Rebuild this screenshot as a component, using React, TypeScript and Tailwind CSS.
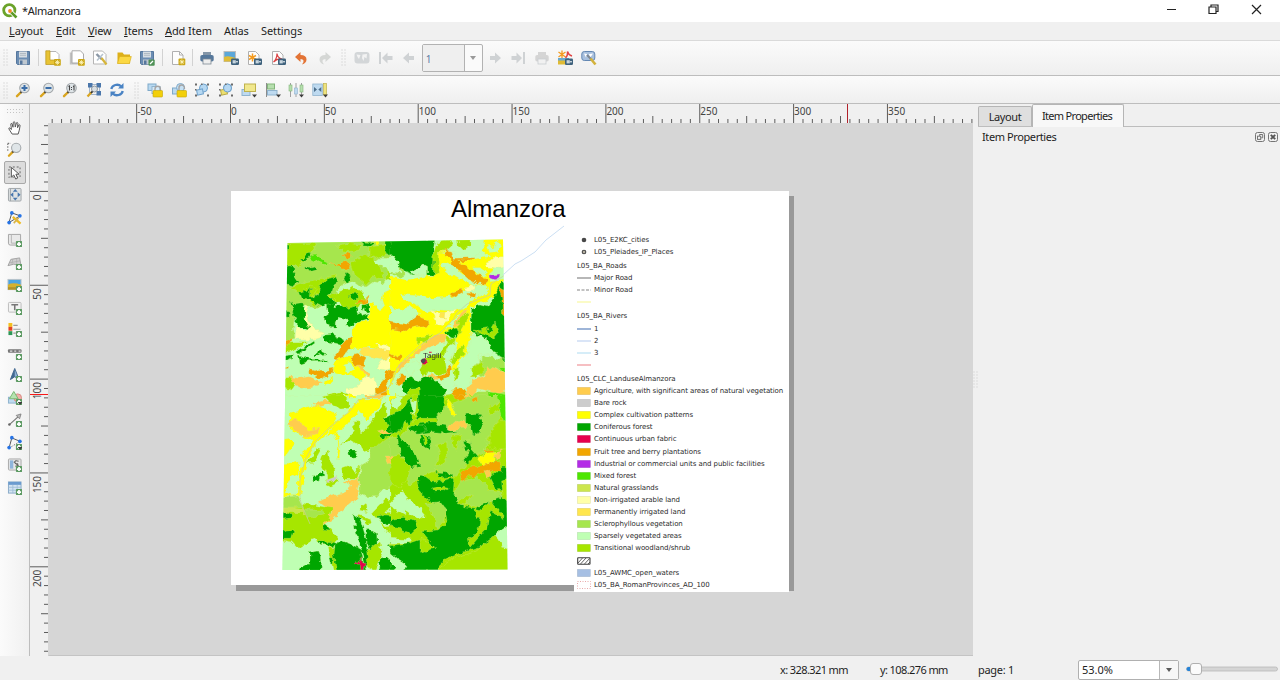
import React from "react";

const UI = "font-['Noto_Sans','Open_Sans',sans-serif]";

/* ---------- map data ---------- */

const P = "#bfffb3";
const T = "#a6e600";
const S = "#a6e64d";
const F = "#00a600";
const Y = "#ffff00";
const O = "#f2a600";
const A = "#ffcc4d";
const N = "#ffffa8";
const E = "#ffe64d";
const M = "#4de600";
const G = "#cce64d";
const U = "#e6004d";
const V = "#b32be6";
const R = "#cccccc";

type Shape = [string, string];

const northWest: Shape[] = [
  [P, "0,0 390,0 390,540 0,540"],
  [S, "40,40 350,40 345,75 372,95 350,100 325,100 305,115 315,130 335,120 355,135 375,150 370,165 350,160 340,175 310,170 290,185 270,185 250,170 230,175 210,185 205,200 150,250 130,250 105,240 75,250 70,310 75,340 40,350"],
  [T, "40,55 140,55 130,75 110,90 90,120 60,125 40,120"],
  [T, "200,65 240,55 270,60 265,75 235,80 210,75"],
  [T, "240,110 270,100 290,85 310,105 330,125 340,160 320,165 310,150 290,180 270,165 250,150"],
  [T, "300,65 345,60 350,85 320,100 300,95"],
  [T, "60,190 110,170 160,160 200,150 195,165 170,175 140,210 100,225 85,200"],
  [T, "170,215 210,200 250,185 280,205 290,230 260,250 230,255 210,235 190,225"],
  [T, "110,190 120,180 140,190 128,215 145,235 130,245 118,230"],
  [T, "350,140 368,130 390,150 390,165 365,168 350,160"],
  [F, "272,48 318,50 305,62 280,60"],
  [Y, "310,48 328,46 326,60 318,62"],
  [F, "345,44 395,40 395,118 378,115 365,98 350,85 345,70"],
  [F, "40,55 58,58 57,72 40,74"],
  [F, "40,125 65,122 76,140 75,155 88,175 70,182 40,175"],
  [F, "92,102 105,95 118,82 125,85 118,100 100,108"],
  [F, "107,125 118,130 135,125 138,135 120,140 108,135"],
  [F, "232,142 242,150 235,175 225,172 222,160"],
  [F, "85,200 100,195 115,200 122,188 122,210 130,215 145,208 150,182 175,160 198,156 204,172 192,180 185,205 170,215 200,230 200,240 172,238 155,246 132,235 118,222 92,218"],
  [F, "60,225 70,240 95,236 105,255 105,280 120,305 110,315 85,303 75,290 68,260"],
  [F, "40,255 58,262 58,275 40,280"],
  [F, "172,238 192,232 195,245 225,240 235,250 258,243 262,262 280,272 297,268 295,280 262,290 245,305 232,300 228,283 212,278 196,290 195,310 172,300 160,278 175,268"],
  [F, "237,205 262,205 262,220 245,223 235,215"],
  [F, "275,240 297,235 297,262 290,265 285,248 276,260"],
  [F, "165,330 190,328 225,347 215,357 170,350 160,340"],
  [F, "80,380 130,348 135,352 85,387"],
  [F, "130,388 150,378 165,385 158,395 148,388 135,393"],
  [F, "85,390 100,393 115,403 175,404 175,409 110,410 90,417"],
  [F, "40,390 70,386 68,400 40,407"],
  [M, "118,98 135,90 150,95 160,105 175,112 160,118 145,113 125,105"],
  [O, "180,115 215,120 210,110 225,107 240,120 232,135 215,135 205,127"],
  [O, "218,84 235,84 245,95 240,105 225,100"],
  [O, "258,232 280,228 298,212 292,235 275,240"],
  [N, "105,240 118,245 110,260 120,290 135,312 160,322 155,340 135,345 75,345 80,302 105,320 118,305 107,280"],
  [T, "60,350 110,350 85,370 40,385 40,365"],
  [Y, "395,185 365,178 362,195 340,205 335,225 342,245 330,255 310,235 298,235 300,270 290,285 262,290 250,310 242,350 235,372 270,375 300,365 395,385 395,310 370,300 358,280 365,255 385,240 395,235"],
  [E, "275,370 320,368 395,375 395,395 340,402 300,395 270,385"],
  [N, "315,356 345,360 375,370 385,380 340,377"],
  [Y, "190,415 210,397 240,390 250,415 280,430 285,455 270,465 245,450 210,445 190,440"],
  [P, "218,420 240,415 255,430 240,442 222,435"],
  [A, "250,415 275,420 300,450 295,460 272,438"],
  [O, "242,335 248,335 240,365 220,395 200,405 190,402 215,360 228,345"],
  [O, "40,350 68,340 60,360 40,365"],
  [O, "118,430 150,440 190,432 188,445 150,460 120,445"],
  [O, "245,390 262,385 288,395 280,425 250,415 243,400"],
  [O, "40,425 55,424 55,430 40,432"],
  [A, "58,455 85,460 120,455 155,472 125,488 95,490 65,475"],
  [T, "40,458 60,458 75,480 65,495 40,490"],
  [N, "320,430 335,405 375,395 365,430 345,435"],
  [T, "165,510 210,500 245,510 230,540 185,540"],
  [A, "130,535 155,525 185,530 180,540 130,540"],
  [Y, "160,475 185,457 185,475 165,485"],
  [Y, "235,545 262,520 330,520 390,440 390,545"],
  [N, "225,490 260,490 280,460 315,460 320,500 290,515 265,520 230,505"],
  [A, "295,515 330,500 340,515 320,525"],
  [O, "345,440 372,430 370,445 350,475 350,515 320,512 318,490 340,465"],
  [O, "360,290 395,300 395,318 365,305"],
  [O, "378,480 395,455 395,490"],
];

const northEast: Shape[] = [
  [P, "0,0 390,0 390,540 0,540"],
  [Y, "0,155 50,165 135,150 145,80 175,85 190,110 270,100 300,95 275,70 285,30 360,30 360,90 315,120 300,150 300,170 345,165 315,215 270,235 240,245 242,340 230,380 200,430 180,440 200,390 200,330 150,330 90,380 30,430 0,480"],
  [P, "155,110 180,115 215,145 250,160 290,175 245,180 220,165 190,155 155,125"],
  [P, "245,125 275,125 292,150 275,155 250,140"],
  [P, "30,208 90,212 120,220 190,215 250,180 290,178 295,205 260,215 225,250 190,258 150,255 110,262 80,240 40,225"],
  [P, "0,245 40,250 65,245 90,265 80,285 50,300 0,295"],
  [P, "290,60 310,70 318,48 335,60 325,80 300,82"],
  [P, "180,75 185,40 280,42 280,75 250,100 210,95"],
  [S, "0,118 20,115 45,125 45,150 30,158 0,145"],
  [P, "0,90 12,95 30,120 30,145 0,140"],
  [F, "0,40 135,40 130,75 135,120 130,150 112,150 112,120 100,118 85,130 70,150 45,140 28,120 10,92 0,92"],
  [P, "62,140 85,130 102,118 112,125 112,150 75,152"],
  [T, "140,55 180,40 188,60 165,80 145,82 145,145 130,152 132,80"],
  [T, "200,40 240,40 240,65 225,75 205,65"],
  [O, "160,75 185,78 190,100 255,98 240,108 200,108 230,125 260,150 290,160 290,172 265,175 235,160 215,140 180,120 180,100"],
  [O, "178,212 190,200 215,192 215,202 195,212"],
  [O, "233,205 258,205 255,217 238,215"],
  [O, "0,290 45,300 80,272 115,285 118,300 75,305 45,318 0,312"],
  [N, "285,115 300,110 315,95 350,95 350,125 325,130 290,125"],
  [N, "225,185 255,180 255,195 235,200"],
  [N, "120,255 150,265 200,255 170,285 155,305 140,300 135,275"],
  [E, "150,262 165,262 163,280 148,278"],
  [P, "165,310 205,270 222,262 212,292 190,308"],
  [A, "195,290 215,262 233,250 222,275 212,300 190,306"],
  [F, "245,250 270,240 290,245 310,220 330,175 360,170 360,410 340,408 330,390 300,375 295,345 270,332 243,328 243,290"],
  [O, "325,183 360,205 360,275 338,270 335,215"],
  [F, "165,320 200,306 206,320 200,338 180,335"],
  [P, "240,335 275,333 312,375 305,385 270,390 250,450 230,490 190,485 195,440 215,400 238,380"],
  [T, "250,315 275,320 275,308 290,305 300,330 315,290 325,320 310,338 280,325 255,325"],
  [A, "80,378 105,350 150,325 172,330 165,350 110,370 70,395 50,412 20,450 25,420"],
  [T, "80,340 130,328 105,352 78,357"],
  [T, "110,395 150,385 170,350 165,335 200,340 195,365 165,400 170,440 145,450 120,440 95,455 88,430"],
  [P, "45,430 65,412 85,408 90,430 60,450"],
  [P, "175,365 205,350 195,370 180,410 160,400"],
  [T, "205,285 232,262 230,290 210,325 200,335 205,310"],
  [T, "225,355 222,385 190,420 183,412 195,380"],
  [O, "130,455 160,450 183,420 185,440 175,458 155,467"],
  [A, "95,455 130,448 150,465 120,460"],
  [F, "35,470 60,455 85,470 110,452 135,465 165,490 160,540 70,540 45,500"],
  [T, "62,490 90,488 92,520 100,540 78,540 72,515 50,510"],
  [T, "190,430 205,425 205,460 195,465"],
  [S, "245,455 255,420 285,392 345,405 360,445 310,430 275,455"],
  [T, "245,430 275,410 285,435 262,455 245,455"],
  [S, "160,510 230,500 345,500 360,540 160,540"],
  [O, "185,495 215,488 232,510 210,525 185,515"],
  [A, "250,465 285,452 292,425 315,430 360,450 350,495 320,508 295,498 262,490 245,522 225,495"],
  [O, "250,520 262,515 258,530 248,528"],
  [M, "290,500 325,505 360,510 360,540 335,535"],
  [M, "330,425 360,425 360,455 338,440"],
  [Y, "170,515 180,525 182,540 172,540"],
  [O, "0,435 15,440 5,460 0,460"],
  [O, "15,480 30,452 50,452 40,475 25,482"],
  [O, "0,385 35,398 30,405 0,395"],
  [V, "300,150 330,147 326,161 315,164 301,159"],
  [U, "95,405 108,402 107,418 97,418"],
  [U, "117,380 122,380 122,384 117,384"],
];

const southWest: Shape[] = [
  [P, "0,0 390,0 390,560 0,560"],
  [Y, "60,55 100,40 140,28 160,42 190,50 202,70 190,90 165,118 140,140 118,180 102,240 95,295 80,302 88,230 105,192 92,180 110,165 130,135 100,125 60,105"],
  [Y, "30,135 60,130 72,145 50,178 30,195"],
  [Y, "30,208 88,200 85,235 60,245 45,290 70,300 90,290 90,300 30,303"],
  [Y, "265,12 335,12 325,35 290,75 265,45 230,90 200,115 165,125 190,90 240,45"],
  [Y, "192,118 202,115 210,165 208,190 202,190 205,150"],
  [Y, "215,0 260,0 260,8 240,10"],
  [A, "280,0 350,0 340,10 285,9"],
  [A, "52,90 75,72 95,85 115,105 150,100 145,115 100,125 75,105"],
  [A, "130,25 160,15 185,15 185,25 150,35"],
  [T, "160,5 180,0 215,0 240,22 240,40 215,42 190,32"],
  [T, "250,80 270,80 272,115 300,90 315,60 345,20 350,65 395,60 395,130 330,150 300,165 285,170 275,155 240,135 212,152 250,110"],
  [F, "395,35 370,55 345,70 355,95 335,110 325,125 340,132 370,118 378,145 380,185 395,180"],
  [S, "300,160 340,140 365,122 378,150 382,190 395,190 395,240 370,280 340,285 320,305 290,305 268,295 265,250 275,210 300,195"],
  [T, "160,175 175,165 180,200 195,225 190,240 200,265 180,275 170,270 170,240 150,205"],
  [T, "110,208 140,160 152,165 130,205"],
  [T, "215,222 235,215 260,230 272,210 262,250 220,250"],
  [F, "235,165 255,165 262,185 245,187 238,180"],
  [F, "127,242 145,240 155,228 160,245 145,255 130,258"],
  [R, "170,255 203,243 203,255 175,263"],
  [A, "147,320 175,305 215,295 235,285 240,268 220,258 265,250 265,270 262,285 268,310 240,325 215,345 190,370 155,392 185,350 165,335"],
  [A, "345,183 368,183 365,200 352,207"],
  [A, "325,108 345,103 360,115 345,118"],
  [T, "30,340 100,325 160,335 185,340 178,370 155,390 170,390 185,405 200,430 190,455 160,450 130,430 110,445 85,462 65,440 30,435"],
  [S, "30,305 85,303 100,335 30,338"],
  [S, "100,345 155,345 165,355 115,370"],
  [G, "30,335 100,340 100,353 30,352"],
  [F, "30,350 65,360 60,370 30,373"],
  [F, "30,412 72,405 65,430 30,430"],
  [F, "155,392 165,387 182,405 160,403"],
  [F, "145,437 185,440 215,450 180,452 150,447"],
  [F, "75,530 120,505 120,470 145,465 152,490 150,530"],
  [T, "175,455 195,455 202,530 190,530 180,480"],
  [F, "195,450 215,437 250,450 270,460 275,490 290,530 200,530 192,480"],
  [F, "177,485 190,485 190,510 180,505"],
  [F, "250,355 270,370 285,420 295,470 300,510 285,520 270,450 255,400"],
  [F, "290,400 320,415 322,455 300,465 290,440"],
  [F, "315,362 350,355 395,370 395,390 350,390 330,375"],
  [F, "330,490 350,485 378,510 375,530 325,530"],
  [F, "350,445 395,450 395,495 375,485"],
  [T, "265,360 300,370 305,385 285,390 288,378 268,370"],
  [T, "300,358 345,312 380,310 350,350 385,362 350,360 318,368"],
  [T, "325,378 350,395 395,390 395,435 350,410"],
  [T, "290,470 330,440 335,475 315,530 295,520"],
  [T, "270,325 290,330 292,350 270,345"],
  [U, "253,500 262,505 272,488 276,500 290,510 280,516 280,530 270,530 268,508 254,507"],
];

const southEast: Shape[] = [
  [T, "0,0 390,0 390,560 0,560"],
  [S, "0,125 30,130 60,90 150,40 260,0 360,0 335,60 300,110 285,170 240,190 210,230 190,250 140,225 90,245 60,270 40,230 0,180"],
  [F, "80,0 165,0 158,50 140,60 142,88 172,92 172,105 205,110 170,115 130,110 80,118 75,90 85,50"],
  [F, "0,60 40,42 62,5 68,45 65,80 100,90 110,110 85,115 60,105 45,75 38,100 0,118"],
  [T, "55,100 60,75 75,80 95,70 140,70 140,80 95,82 75,92"],
  [F, "20,110 40,140 78,180 88,212 60,217 30,175"],
  [F, "88,120 110,120 130,145 115,165 95,150"],
  [T, "98,122 108,122 115,148 105,150"],
  [F, "230,58 270,55 280,85 265,120 245,115 240,90 230,80"],
  [F, "215,140 240,138 245,165 260,182 235,207 220,195 238,175"],
  [T, "295,40 335,20 330,45 300,60"],
  [T, "300,120 325,80 360,80 360,165 325,165 295,150"],
  [T, "140,150 170,140 172,180 155,210 135,215 150,175"],
  [T, "185,120 210,120 200,165 190,160"],
  [T, "0,185 30,180 60,215 50,255 30,280 0,265"],
  [F, "80,255 100,240 130,262 185,250 195,262 192,300 220,310 222,335 260,340 300,305 345,300 360,320 360,385 320,435 270,455 200,478 160,495 140,530 0,530 0,455 50,448 88,435 135,460 95,410 140,405 172,380 165,345 120,318 90,290"],
  [F, "132,232 155,232 185,235 190,245 150,248 140,225"],
  [T, "90,430 115,440 138,460 120,463 105,475 90,465"],
  [S, "105,325 150,320 168,345 165,375 140,400 128,350"],
  [T, "125,280 150,275 175,280 160,290 130,290"],
  [S, "190,300 215,255 260,245 300,285 350,292 330,310 260,335 210,328"],
  [T, "245,300 225,330 200,325 232,300"],
  [T, "255,340 275,345 300,318 345,372 300,348 290,400 240,457 235,430 262,410 272,370 258,370"],
  [F, "300,245 345,215 360,225 360,280 320,285"],
  [T, "335,255 360,250 360,320 340,310"],
  [T, "138,530 190,488 250,472 330,410 360,430 360,530"],
  [P, "318,415 360,385 360,465 335,455"],
  [P, "0,325 35,290 48,310 70,320 108,365 85,372 45,345 45,362 0,335"],
  [P, "0,430 65,435 55,447 0,448"],
  [P, "0,470 22,490 45,505 40,530 20,530 0,500"],
  [P, "60,12 80,18 75,65 68,50"],
  [P, "0,35 15,0 38,2 28,40 10,38"],
  [F, "0,378 40,370 75,378 80,395 60,415 40,408 30,395 0,390"],
  [O, "210,240 240,215 270,215 290,200 330,200 337,232 290,228 260,240 235,243 215,263"],
  [O, "285,165 312,162 310,178 285,178"],
  [O, "190,0 225,0 228,12 200,14"],
  [O, "248,12 262,5 262,15 252,22"],
  [A, "225,0 240,0 243,10 228,10"],
  [A, "172,102 195,80 225,72 230,98 205,102 185,108"],
  [A, "318,172 334,168 328,195 312,192"],
  [A, "283,228 302,222 302,245 292,252"],
  [A, "0,182 8,185 0,200"],
  [Y, "262,188 285,175 318,172 312,198 280,212"],
  [Y, "170,8 185,30 200,60 195,65 178,48"],
  [Y, "0,0 15,0 0,28"],
  [M, "322,0 360,0 360,85 340,80"],
];

const quadrants: { x: number; y: number; shapes: Shape[] }[] = [
  { x: 270, y: 225, shapes: northWest },
  { x: 390, y: 225, shapes: northEast },
  { x: 270, y: 395, shapes: southWest },
  { x: 390, y: 395, shapes: southEast },
];

function LandUseMap() {
  return (
    <svg className="absolute left-[221px] top-[102px]" width="300" height="350" viewBox="270 225 300 350">
      <defs>
        <clipPath id="mapFrame">
          <polygon points="287.5,243 503,239.5 507.5,569.5 282.5,570" />
        </clipPath>
        <filter id="ragged" x="0" y="0" width="100%" height="100%" colorInterpolationFilters="sRGB">
          <feTurbulence type="fractalNoise" baseFrequency="0.17" numOctaves="2" seed="7" result="n" />
          <feDisplacementMap in="SourceGraphic" in2="n" scale="6.5" xChannelSelector="R" yChannelSelector="G" />
        </filter>
      </defs>
      <g clipPath="url(#mapFrame)">
        <rect x="270" y="225" width="250" height="350" fill={P} />
        <g filter="url(#ragged)">
          {quadrants.map((q) => (
            <svg key={`${q.x}-${q.y}`} x={q.x} y={q.y} width="130" height="185" viewBox="0 0 390 555">
              {q.shapes.map(([fill, points], i) => (
                <polygon key={i} points={points} fill={fill} stroke="#d8e88a" strokeWidth="1.200" strokeOpacity="0.7" />
              ))}
            </svg>
          ))}
        </g>
        <path
          d="M505 275L491 284L490 295L467 304L457 313L453 320L440 333L423 343L407 357L397 368L392 382L386 391L372 397L358 400L350 411L330 427L315 442L305 460L300 480L300 500L306 515L310 524"
          fill="none"
          stroke="#c3d0a0"
          strokeWidth="0.800"
          strokeOpacity="0.9"
        />
      </g>
      <path d="M503 275L515 264L521 261L535 252L546 240L564 226" fill="none" stroke="#cbdff3" strokeWidth="1" />
      <circle cx="423.500" cy="361" r="2.400" fill="#4c4a50" />
      <path d="M424.500 362L427 359.500L426.500 363L423.500 365Z" fill={U} fillOpacity="0.800" />
    </svg>
  );
}

/* ---------- legend ---------- */

type Entry = { kind: string; label: string; color?: string };

const legendEntries: Entry[] = [
  { kind: "dot", label: "L05_E2KC_cities" },
  { kind: "ring", label: "L05_Pleiades_IP_Places" },
  { kind: "head", label: "L05_BA_Roads" },
  { kind: "line", label: "Major Road", color: "#7c7c7c" },
  { kind: "dash", label: "Minor Road", color: "#858585" },
  { kind: "line", label: "", color: "#f7f79a" },
  { kind: "head", label: "L05_BA_Rivers" },
  { kind: "line", label: "1", color: "#4f78b8" },
  { kind: "line", label: "2", color: "#bccff0" },
  { kind: "line", label: "3", color: "#b5def2" },
  { kind: "line", label: "", color: "#ee8a90" },
  { kind: "head", label: "L05_CLC_LanduseAlmanzora" },
  { kind: "fill", label: "Agriculture, with significant areas of natural vegetation", color: A },
  { kind: "fill", label: "Bare rock", color: R },
  { kind: "fill", label: "Complex cultivation patterns", color: Y },
  { kind: "fill", label: "Coniferous forest", color: F },
  { kind: "fill", label: "Continuous urban fabric", color: U },
  { kind: "fill", label: "Fruit tree and berry plantations", color: O },
  { kind: "fill", label: "Industrial or commercial units and public facilities", color: V },
  { kind: "fill", label: "Mixed forest", color: M },
  { kind: "fill", label: "Natural grasslands", color: G },
  { kind: "fill", label: "Non-irrigated arable land", color: N },
  { kind: "fill", label: "Permanently irrigated land", color: E },
  { kind: "fill", label: "Sclerophyllous vegetation", color: S },
  { kind: "fill", label: "Sparsely vegetated areas", color: P },
  { kind: "fill", label: "Transitional woodland/shrub", color: T },
  { kind: "hatch", label: "" },
  { kind: "fill", label: "L05_AWMC_open_waters", color: "#a6bfe3" },
  { kind: "dotted", label: "L05_BA_RomanProvinces_AD_100" },
];

function Symbol({ kind, color }: { kind: string; color?: string }) {
  return (
    <svg width="14" height="8" viewBox="0 0 14 8" className="shrink-0">
      {kind === "dot" && <circle cx="7" cy="4" r="2.300" fill="#484848" />}
      {kind === "ring" && <circle cx="7" cy="4" r="1.800" fill="#b5b0a0" stroke="#484848" strokeWidth="1.100" />}
      {kind === "line" && <path d="M0 4H14" stroke={color} strokeWidth="1.100" />}
      {kind === "dash" && <path d="M0 4H14" stroke={color} strokeWidth="1.100" strokeDasharray="3 1.500" />}
      {kind === "fill" && <rect x="0.300" y="0.300" width="13.200" height="7.400" fill={color} stroke="#00000022" strokeWidth="0.500" />}
      {kind === "hatch" && (
        <g stroke="#3c3c3c" strokeWidth="0.800" fill="none">
          <rect x="0.700" y="0.700" width="12.300" height="6.600" rx="0.500" strokeWidth="1.100" />
          <path d="M1 6L5.500 1M3.500 7L9 1M7.500 7L12.500 1.500M11 7L13 5" />
        </g>
      )}
      {kind === "dotted" && (
        <rect x="0.500" y="0.500" width="13" height="7" fill="#fff" stroke="#e8a9a9" strokeDasharray="1 1.500" />
      )}
    </svg>
  );
}

function Legend() {
  return (
    <div className="absolute left-[525px] top-[111px] flex h-[358px] w-[214.5px] flex-col overflow-hidden bg-white pl-[3px] font-['DejaVu_Sans',sans-serif] text-[7px] leading-[12.17px] text-[#2b2b2b]">
      {legendEntries.map((e, i) =>
        e.kind === "head" ? (
          <div key={i} className="mt-[1.900px] h-[12.120px] shrink-0 whitespace-nowrap tracking-[-0.080px]">
            {e.label}
          </div>
        ) : (
          <div key={i} className="flex h-[12.120px] shrink-0 items-center gap-[3px] whitespace-nowrap tracking-[-0.080px]">
            <Symbol kind={e.kind} color={e.color} />
            <span>{e.label}</span>
          </div>
        )
      )}
    </div>
  );
}

/* ---------- icons ---------- */

function Lens({ children }: { children?: React.ReactNode }) {
  return (
    <g>
      <path d="M2 14.200L6.200 10" stroke="#d9a520" strokeWidth="2.400" strokeLinecap="round" />
      <path d="M5.500 10.700L7 9.200" stroke="#333" strokeWidth="2" />
      <circle cx="9.500" cy="6" r="4.800" fill="#dfe5e8" stroke="#a3a8ab" strokeWidth="1.100" />
      {children}
    </g>
  );
}

function Star({ x, y }: { x: number; y: number }) {
  return (
    <g transform={`translate(${x} ${y})`}>
      <rect width="6.800" height="6.800" rx="1" fill="#cba716" />
      <path d="M3.400 1V5.800M1 3.400H5.800M1.700 1.700L5.100 5.100M5.100 1.700L1.700 5.100" stroke="#fff7c4" strokeWidth="0.800" />
    </g>
  );
}

function Plus() {
  return (
    <g>
      <rect x="9.200" y="9.200" width="6.400" height="6.400" rx="0.800" fill="#5d9a63" />
      <path d="M12.400 10.300V14.500M10.300 12.400H14.500" stroke="#fff" strokeWidth="1.800" />
    </g>
  );
}

function Disk() {
  return (
    <g>
      <path d="M1.500 1.500H14.500V14.500H2.500L1.500 13.500Z" fill="#6b8db3" stroke="#56779d" />
      <rect x="4" y="1.500" width="8" height="6" fill="#d7dde3" />
      <path d="M5 3.500H11M5 5.300H11" stroke="#a1acb6" strokeWidth="0.700" />
      <rect x="4" y="9.500" width="8" height="5" fill="#bfc8d0" />
      <rect x="5" y="10.500" width="2.500" height="4" fill="#56779d" />
    </g>
  );
}

function Export() {
  return (
    <g>
      <rect x="8" y="8.500" width="8" height="6.500" rx="1.200" fill="#3f627d" />
      <rect x="9.600" y="10.200" width="3.200" height="3.200" fill="#c9d6df" />
      <path d="M13 11.800H15" stroke="#fff" />
    </g>
  );
}

function Paper() {
  return <path d="M2.500 1.500H9.500L13 5V14.500H2.500Z" fill="#fdfdfd" stroke="#b0b0b0" />;
}

function Lock({ open }: { open?: boolean }) {
  return (
    <g>
      <path d={open ? "M8 9V6a2.700 2.700 0 0 1 5.400-0.500V7" : "M8 9V7a2.700 2.700 0 0 1 5.400 0V9"} fill="none" stroke="#a5a5a5" strokeWidth="1.400" />
      <rect x="6" y="8.500" width="9.500" height="6.500" rx="0.800" fill="#f2cf0a" stroke="#c5a505" strokeWidth="0.600" />
    </g>
  );
}

function Vertices() {
  return (
    <g fill="#6b6b6b">
      <rect x="1" y="1.500" width="2" height="2" />
      <rect x="7" y="1.500" width="1.500" height="1.500" />
      <rect x="13" y="1.500" width="2" height="2" />
      <rect x="1" y="7" width="1.500" height="1.500" />
      <rect x="1" y="12.500" width="2" height="2" />
      <rect x="13" y="12.500" width="2" height="2" />
    </g>
  );
}

const Drop = () => <path d="M11 12.500H16L13.500 15.500Z" fill="#3c3c3c" />;

function Glyph({ name }: { name: string }) {
  switch (name) {
    case "save":
      return <Disk />;
    case "newLayout":
      return (
        <g>
          <path d="M2 5V1.500H11L14 4.500V14H5" fill="#fff" stroke="#b5b5b5" />
          <path d="M0.800 0.800H5V10H10V14.500H0.800Z" fill="#e8c334" stroke="#b9961a" strokeWidth="0.700" />
          <Star x={9} y={9} />
        </g>
      );
    case "duplicate":
      return (
        <g>
          <rect x="0.800" y="2.500" width="11" height="12" fill="#c2c2c2" />
          <path d="M3 0.800H11.500L14.500 4V13H3Z" fill="#fff" stroke="#aaa" />
          <Star x={9} y={9} />
        </g>
      );
    case "manager":
      return (
        <g>
          <path d="M1.500 1H10.500L14 4.500V14H1.500Z" fill="#fff" stroke="#b5b5b5" />
          <path d="M4.500 4L10 9.500" stroke="#8a97a5" strokeWidth="2.400" />
          <path d="M9.500 8L14.500 14.500" stroke="#d6b53a" strokeWidth="2.200" />
          <path d="M11 4L5 10.500" stroke="#b3c1cd" strokeWidth="1.500" />
        </g>
      );
    case "open":
      return (
        <g>
          <path d="M1.500 13.500V2.500H6.500L8 4.500H14V13.500Z" fill="#ddb01a" />
          <path d="M1.500 13.500L3.500 6.500H15.300L13.500 13.500Z" fill="#fbd843" stroke="#d8ac18" strokeWidth="0.600" />
        </g>
      );
    case "saveAs":
      return (
        <g>
          <Disk />
          <rect x="9.500" y="9.500" width="6.200" height="6.200" rx="1" fill="#4f9157" />
          <path d="M11 14L14 11" stroke="#fff" strokeWidth="1.200" />
        </g>
      );
    case "addPages":
      return (
        <g>
          <Paper />
          <path d="M9.500 1.500V5H13" fill="none" stroke="#b0b0b0" />
          <Star x={8.500} y={8.500} />
        </g>
      );
    case "print":
    case "printOff":
      return (
        <g opacity={name === "print" ? 1 : 0.35}>
          <rect x="4" y="2" width="8" height="4" fill={name === "print" ? "#8496a8" : "#999"} />
          <rect x="1.300" y="5" width="13.400" height="6.500" rx="1.800" fill={name === "print" ? "#56789b" : "#999"} />
          <rect x="4" y="9" width="8" height="5" fill="#eee" stroke="#7d8994" strokeWidth="0.800" />
        </g>
      );
    case "image":
      return (
        <g>
          <rect x="1" y="1.500" width="11.500" height="10" fill="#5ba7d9" stroke="#bdbdbd" />
          <path d="M1 7Q5 5 12.500 8V11.500H1Z" fill="#dfbc38" />
          <Export />
        </g>
      );
    case "svg":
      return (
        <g>
          <Paper />
          <path d="M6.500 3.500V11.500M3 5.500L10 9.500M10 5.500L3 9.500" stroke="#f39a1e" strokeWidth="1.500" />
          <Export />
        </g>
      );
    case "pdf":
      return (
        <g>
          <Paper />
          <path d="M3.500 12Q7 9 7 3.500Q7.500 8 12 9Q7 8.500 3.500 12" fill="none" stroke="#dc4242" strokeWidth="1.200" />
          <Export />
        </g>
      );
    case "undo":
    case "redo":
      return (
        <g transform={name === "redo" ? "translate(16 0) scale(-1 1)" : undefined}>
          <path
            d="M2 7L7.500 2V5Q13.500 5 13.500 9.500Q13.500 13 9 14.500Q11 12 10.500 10.500Q10 9 7.500 9V12Z"
            fill={name === "undo" ? "#e37436" : "#d5d7d5"}
          />
        </g>
      );
    case "atlas":
      return (
        <g>
          <rect x="0.500" y="2" width="15" height="11.500" rx="3" fill="#d3d6d8" />
          <path d="M2.500 4.500L6.500 5L5 9L3.500 7ZM8.500 4.500L13 4L12.500 8.500L10.500 7L9.500 11L8 8Z" fill="#f3f3f3" />
        </g>
      );
    case "first":
      return <path d="M1 2H3V14H1ZM4 8L9.500 2.500V6H14.500V10H9.500V13.500Z" fill="#cfd2d4" />;
    case "prev":
      return <path d="M2 8L8 2.500V6H13V10H8V13.500Z" fill="#cfd2d4" />;
    case "next":
      return <path d="M14 8L8 2.500V6H3V10H8V13.500Z" fill="#cfd2d4" />;
    case "last":
      return <path d="M15 2H13V14H15ZM12 8L6.500 2.500V6H1.500V10H6.500V13.500Z" fill="#cfd2d4" />;
    case "exportAtlas":
      return (
        <g>
          <path d="M5 0.500V8M1.500 2L8.500 7M8.500 2L1.500 7" stroke="#f39a1e" strokeWidth="1.300" />
          <path d="M8.500 8Q11 5.500 10.500 1.500Q11.500 5 15 6" fill="none" stroke="#e04444" strokeWidth="1.400" />
          <rect x="1" y="8" width="11" height="6.500" fill="#e0bb35" />
          <rect x="1" y="8" width="11" height="2.500" fill="#69a9cf" />
          <Export />
        </g>
      );
    case "atlasSettings":
      return (
        <g>
          <rect x="0.800" y="1.500" width="13" height="9" rx="2.500" fill="#a8c0de" stroke="#6488b3" />
          <path d="M3 3.500L6 4L5 7.500ZM8 4L12 3.500L9 8Z" fill="#fff" />
          <path d="M6 5L10 9" stroke="#7e8994" strokeWidth="2.200" />
          <path d="M9.500 8.500L14.500 14.500" stroke="#d3b23c" strokeWidth="2.600" />
        </g>
      );
    case "zoomIn":
      return (
        <Lens>
          <path d="M9.500 3V9M6.500 6H12.500" stroke="#3a6da8" strokeWidth="2" />
        </Lens>
      );
    case "zoomOut":
      return (
        <Lens>
          <path d="M6.500 6H12.500" stroke="#3a6da8" strokeWidth="2" />
        </Lens>
      );
    case "zoomActual":
      return (
        <Lens>
          <path d="M6.500 4.500L7.500 4V8.500M11 4.500L12 4V8.500" stroke="#444" strokeWidth="1.100" fill="none" />
          <path d="M9.500 5V6M9.500 7V8" stroke="#444" />
        </Lens>
      );
    case "zoomFull":
      return (
        <g>
          <rect x="3.500" y="2.500" width="10" height="10" fill="none" stroke="#9cb0c6" strokeWidth="0.900" />
          <path d="M2 1H6.500V5.500H2ZM10.500 1H15V5.500H10.500ZM10.500 9H15V13.500H10.500Z" fill="#4b77ab" />
          <circle cx="8.500" cy="7" r="3" fill="#d9e0e5" stroke="#8e979e" />
          <path d="M1.500 14.500L5.500 10.300" stroke="#d9a520" strokeWidth="2.300" />
          <path d="M5 11L6.500 9.300" stroke="#333" strokeWidth="1.800" />
        </g>
      );
    case "refresh":
      return (
        <g fill="none" stroke="#4a83c4" strokeWidth="2.300">
          <path d="M2.300 7A5.800 5 0 0 1 12.200 4.300" />
          <path d="M13.700 9A5.800 5 0 0 1 3.800 11.700" />
          <path d="M14.500 1V6.500H9ZM1.500 15V9.500H7Z" fill="#4a83c4" stroke="none" />
        </g>
      );
    case "lock":
      return (
        <g>
          <rect x="1" y="2" width="8" height="6.500" fill="#b9d9f0" stroke="#7fa9c9" />
          <rect x="5" y="4.500" width="8" height="7" fill="#d6e9f6" stroke="#8fb3ce" />
          <Lock />
        </g>
      );
    case "unlock":
      return (
        <g>
          <rect x="1.500" y="6" width="8" height="6" fill="#b9d9f0" stroke="#7fa9c9" />
          <circle cx="9.500" cy="5.500" r="4" fill="#c6e1f4" stroke="#7fa9c9" />
          <Lock open />
        </g>
      );
    case "group":
    case "ungroup":
      return (
        <g>
          <circle cx="9.500" cy="6" r="4" fill="#b6d8f2" stroke="#6fa2cc" />
          <rect x="3" y="7.500" width="6" height="5" fill={name === "group" ? "#b6d8f2" : "#eddf70"} stroke={name === "group" ? "#6fa2cc" : "#b9aa43"} transform="rotate(-12 6 10)" />
          {name === "ungroup" && <circle cx="9.500" cy="6" r="4" fill="#b6d8f2" stroke="#6fa2cc" />}
          <Vertices />
        </g>
      );
    case "raise":
      return (
        <g>
          <rect x="1" y="7.500" width="8" height="6" fill="#bedaf0" stroke="#8fb3ce" />
          <rect x="3.500" y="2" width="11" height="7.500" fill="#f1e88d" stroke="#bfb24d" />
          <Drop />
        </g>
      );
    case "align":
      return (
        <g>
          <path d="M1.500 1V15" stroke="#8c8c8c" />
          <rect x="2.500" y="2" width="7" height="5" fill="#b6dfae" stroke="#83b57b" />
          <rect x="2.500" y="8.500" width="9.500" height="4.500" fill="#bedaf0" stroke="#8fb3ce" />
          <Drop />
        </g>
      );
    case "distribute":
      return (
        <g>
          <path d="M2.500 1V15M8 1V15M13.500 1V13" stroke="#a0a0a0" />
          <rect x="1" y="3" width="3" height="6" fill="#b6dfae" stroke="#83b57b" strokeWidth="0.600" />
          <rect x="6.500" y="6" width="3" height="6" fill="#bedaf0" stroke="#8fb3ce" strokeWidth="0.600" />
          <rect x="12" y="3" width="3" height="7" fill="#b6dfae" stroke="#83b57b" strokeWidth="0.600" />
          <Drop />
        </g>
      );
    case "resize":
      return (
        <g>
          <rect x="0.800" y="2" width="9.500" height="11.500" fill="#bedaf0" stroke="#8fb3ce" strokeWidth="0.800" />
          <path d="M2 5L5 7.500L2 10ZM9.300 5L6.300 7.500L9.300 10Z" fill="#4d6f8b" />
          <rect x="11.500" y="1.500" width="3" height="11.500" fill="#eee37e" stroke="#bfb24d" strokeWidth="0.700" />
          <Drop />
        </g>
      );
    case "pan":
      return (
        <path
          d="M5.300 14.500L2 9.300Q1.500 8 2.800 8.200L4.600 9.800L3.900 4.200Q4.200 3 5.200 3.900L6.200 7.500L6.500 2.300Q7.300 1 8.100 2.300L8.500 7.300L9.800 2.900Q10.900 2 11.200 3.400L10.900 8L12.300 5Q13.500 4.600 13.500 5.800L12.700 10.500L11.500 14.500Z"
          fill="#fff"
          stroke="#555"
          strokeWidth="1"
        />
      );
    case "zoom":
      return (
        <g>
          <path d="M0.800 1.500H4M0.800 1.500V9" stroke="#777" strokeWidth="1.200" strokeDasharray="1.500 1.500" />
          <Lens />
        </g>
      );
    case "select":
      return (
        <g>
          <rect x="2" y="2" width="11.500" height="10.500" fill="none" stroke="#8d8d8d" strokeWidth="1.500" strokeDasharray="2 2" />
          <path d="M4.500 2.500V12.500L7 10.300L9 14.500L11 13.500L9.200 9.500H12.500Z" fill="#fff" stroke="#555" />
        </g>
      );
    case "moveContent":
      return (
        <g>
          <rect x="1.500" y="1.500" width="13" height="13" rx="1" fill="#dfe2e4" stroke="#9fa4a8" />
          <path d="M3.500 1.500V14.500" stroke="#9fa4a8" />
          <path d="M8.500 2L11 5H6ZM8.500 14L11 11H6ZM3.500 8L6.500 5.500V10.500ZM14 8L11 5.500V10.500Z" fill="#4876ad" />
        </g>
      );
    case "editNodes":
      return (
        <g>
          <path d="M2 13L5 3L13.500 6Z" fill="none" stroke="#555" />
          <path d="M6 7L14 14" stroke="#eebb24" strokeWidth="2.400" />
          <path d="M12 8L7 13.500" stroke="#d8b44a" strokeWidth="1.800" />
          <circle cx="2.200" cy="13" r="1.900" fill="#2673e5" />
          <circle cx="5" cy="3" r="1.900" fill="#2673e5" />
          <circle cx="13.300" cy="6" r="1.900" fill="#2673e5" />
        </g>
      );
    case "addMap":
      return (
        <g>
          <path d="M1.500 2.500H14V13.500H3.500Q1.500 13.500 1.500 11.500Z" fill="#e9e9e9" stroke="#a5a5a5" />
          <path d="M4.500 2.500V11.500H14" fill="none" stroke="#b5b5b5" />
          <Plus />
        </g>
      );
    case "add3d":
      return (
        <g>
          <path d="M1 11L4 4.500L13 3L14.500 11L7 9.500Z" fill="#cfcfcf" stroke="#a3a3a3" />
          <path d="M3 8L13.500 6M6 4L5 10M10 3.500L10 10" stroke="#aaa" strokeWidth="0.700" />
          <Plus />
        </g>
      );
    case "addPicture":
      return (
        <g>
          <rect x="1" y="2.500" width="13.500" height="10.500" fill="#4ba5e4" stroke="#b9c3c9" />
          <path d="M1 8Q6 5 14.500 8V13H1Z" fill="#d5b12f" />
          <path d="M1 10.500H14.500V13H1Z" fill="#b1922c" />
          <Plus />
        </g>
      );
    case "addLabel":
      return (
        <g>
          <rect x="1.500" y="2.500" width="13" height="10" rx="1" fill="#f3f3f3" stroke="#bcbcbc" />
          <path d="M4.500 5H11.500M8 5V10.500" stroke="#777" strokeWidth="1.600" />
          <Plus />
        </g>
      );
    case "addLegend":
      return (
        <g>
          <rect x="1.500" y="1" width="4" height="4" fill="#f4c01e" />
          <rect x="1.500" y="5" width="4" height="4" fill="#e34422" />
          <rect x="1.500" y="9.500" width="4" height="4" fill="#2b9756" />
          <path d="M6.500 3.500H11M6.500 7.500H14M6.500 11.500H9" stroke="#9b9b9b" strokeWidth="1.200" />
          <Plus />
        </g>
      );
    case "addScale":
      return (
        <g>
          <rect x="1" y="4.500" width="14" height="3.500" rx="1" fill="#777" />
          <path d="M3 6.200H5.500M7.500 6.200H9.500M12 6.200H14" stroke="#ddd" strokeWidth="1.300" />
          <Plus />
        </g>
      );
    case "addArrowN":
      return (
        <g>
          <path d="M8 1.500L12.500 13L8 10L3.500 13Z" fill="#8fb2d6" stroke="#476c93" />
          <path d="M8 1.500V10L3.500 13Z" fill="#426890" />
          <Plus />
        </g>
      );
    case "addShape":
      return (
        <g>
          <rect x="1.500" y="7.500" width="8" height="6" fill="#bedaf0" stroke="#8fb3ce" />
          <circle cx="11" cy="8" r="4" fill="#f2b0aa" stroke="#d88982" />
          <path d="M7 1.500L11.500 9H2.500Z" fill="#b6e3b0" stroke="#79b873" />
          <Plus />
          <Drop />
        </g>
      );
    case "addArrow":
      return (
        <g>
          <path d="M2.500 13L12.500 4" stroke="#777" strokeWidth="1.200" />
          <path d="M9.500 3.500L14.500 2L13 7Z" fill="#bbb" stroke="#777" strokeWidth="0.800" />
          <circle cx="2.500" cy="13" r="1.300" fill="#666" />
          <Plus />
        </g>
      );
    case "addNodes":
      return (
        <g>
          <path d="M2.200 13L5 3L13.300 6.500" fill="none" stroke="#555" />
          <path d="M13.300 6.500L4 12.500" fill="none" stroke="#777" strokeDasharray="1.500 1.500" />
          <circle cx="2.200" cy="13" r="1.900" fill="#2673e5" />
          <circle cx="5" cy="2.800" r="1.900" fill="#2673e5" />
          <circle cx="13.300" cy="6.500" r="1.900" fill="#2673e5" />
          <Plus />
          <Drop />
        </g>
      );
    case "addHtml":
      return (
        <g>
          <rect x="1.500" y="2" width="13" height="11.500" rx="1" fill="#e7e7e7" stroke="#aaa" />
          <rect x="3" y="3.500" width="3.500" height="8.500" fill="#8fb5dc" />
          <path d="M12 4.500Q8 3 8 5.500Q8.500 7.500 11 7Q12 9 8.500 9.500M7 5L12 9" stroke="#666" strokeWidth="1.100" fill="none" />
          <Plus />
        </g>
      );
    case "addTable":
      return (
        <g>
          <rect x="1.500" y="2" width="13" height="11.500" fill="#d4e4f2" stroke="#8aabc8" />
          <rect x="1.500" y="2" width="13" height="3" fill="#6b9bcf" />
          <path d="M1.500 7.500H14.500M1.500 10.500H14.500M6 5V13.500M10.500 5V13.500" stroke="#9bbad6" strokeWidth="0.800" />
          <Plus />
        </g>
      );
    default:
      return null;
  }
}

function Tool({ name }: { name: string }) {
  return (
    <div className="flex w-[23.5px] shrink-0 items-center justify-center">
      <svg width="16" height="16" viewBox="0 0 16 16">
        <Glyph name={name} />
      </svg>
    </div>
  );
}

function Separator({ className }: { className: string }) {
  return (
    <div className={`flex shrink-0 justify-center ${className}`}>
      <div className="h-[17px] w-px bg-[#d2d2d2]" />
    </div>
  );
}

function Grip({ className }: { className: string }) {
  return (
    <div className={`flex shrink-0 items-center justify-center ${className}`}>
      <svg width="5" height="17" viewBox="0 0 5 17">
        <path d="M1 0.500V17M4 0.500V17" stroke="#c4c4c4" strokeDasharray="1 2" />
      </svg>
    </div>
  );
}

/* ---------- rulers ---------- */

const STEP = 9.385;

function TopRuler() {
  const ticks = Array.from({ length: 99 }, (_, i) => i - 19);
  return (
    <svg width="943" height="19" viewBox="30 104 943 19" className="block shrink-0">
      {ticks.map((t) => {
        const x = 230.500 + t * STEP;
        if (x < 50 || x > 973) return null;
        const top = t % 10 === 0 ? 104 : t % 5 === 0 ? 116 : 119;
        return <path key={t} d={`M${x} ${top}V123`} stroke="#5c5c5c" />;
      })}
      {[-50, 0, 50, 100, 150, 200, 250, 300, 350].map((v) => (
        <text key={v} x={230.500 + (v / 5) * STEP + 0.500} y="115" fontSize="10" fill="#444" className="font-['Noto_Sans',sans-serif]">
          {v}
        </text>
      ))}
      <rect x="847" y="104" width="1" height="19" fill="#b0202a" />
    </svg>
  );
}

function SideRuler() {
  const ticks = Array.from({ length: 60 }, (_, i) => i - 7);
  return (
    <svg width="18" height="533" viewBox="30 123 18 533" className="block shrink-0">
      {ticks.map((t) => {
        const y = 191.400 + t * STEP;
        if (y > 656) return null;
        const left = t % 10 === 0 ? 30 : t % 5 === 0 ? 41 : 44;
        return <path key={t} d={`M${left} ${y}H48`} stroke="#5c5c5c" />;
      })}
      {[0, 50, 100, 150, 200].map((v) => (
        <text
          key={v}
          transform={`translate(40.500 ${191.400 + (v / 5) * STEP + 3}) rotate(-90)`}
          textAnchor="end"
          fontSize="10"
          fill="#444"
          className="font-['Noto_Sans',sans-serif]"
        >
          {v}
        </text>
      ))}
      <rect x="30" y="394" width="18" height="1" fill="#f81818" />
    </svg>
  );
}

/* ---------- window ---------- */

const fileTools = ["newLayout", "duplicate", "manager", "open", "saveAs"];
const exportTools = ["print", "image", "svg", "pdf", "undo", "redo"];
const sideTools = [
  "pan", "zoom", "select", "moveContent", "editNodes", "addMap", "add3d", "addPicture", "addLabel",
  "addLegend", "addScale", "addArrowN", "addShape", "addArrow", "addNodes", "addHtml", "addTable",
];

function TitleBar() {
  return (
    <div className="flex h-[22px] shrink-0 items-center bg-white">
      <svg width="16" height="16" viewBox="0 0 16 16" className="ml-[2px]">
        <circle cx="7.300" cy="7.300" r="5.600" fill="none" stroke="#6ba32a" strokeWidth="2.800" />
        <path d="M9 9L14 14" stroke="#fff" strokeWidth="4" />
        <path d="M9.300 9.300L14.500 14.500" stroke="#5b9a25" strokeWidth="2.600" />
        <circle cx="8" cy="8" r="1.900" fill="#f08a24" />
      </svg>
      <span className="ml-[4px] text-[11px] tracking-[-0.3px] text-[#222]">*Almanzora</span>
      <div className="ml-auto flex items-center">
        <svg width="114" height="22" viewBox="1166 0 114 22" fill="none" stroke="#222" strokeWidth="1">
          <path d="M1167 9.500H1176" />
          <path d="M1209 7H1216V13.500H1209ZM1211 7V5H1218V11.500H1216" strokeWidth="1.200" />
          <path d="M1252 5L1261 14M1261 5L1252 14" strokeWidth="1.200" />
        </svg>
      </div>
    </div>
  );
}

function MenuBar() {
  return (
    <div className="flex h-[18px] shrink-0 items-center bg-[#f0f0f0] pl-[9px] text-[11px] tracking-[-0.1px] text-[#1e1e1e]">
      <div className="w-[47px]"><u className="underline-offset-1">L</u>ayout</div>
      <div className="w-[32px]"><u className="underline-offset-1">E</u>dit</div>
      <div className="w-[36px]"><u className="underline-offset-1">V</u>iew</div>
      <div className="w-[41px]"><u className="underline-offset-1">I</u>tems</div>
      <div className="w-[59px]"><u className="underline-offset-1">A</u>dd Item</div>
      <div className="w-[37px]">Atlas</div>
      <div>Settings</div>
    </div>
  );
}

export default function App() {
  return (
    <div className={`flex h-[680px] w-[1280px] flex-col overflow-hidden bg-[#f0f0f0] text-[11px] text-[#1e1e1e] ${UI}`}>
      <TitleBar />
      <MenuBar />

      <div className="flex h-[36px] shrink-0 items-center border-b border-t border-b-[#bdbdbd] border-t-[#dadada] bg-gradient-to-b from-[#fbfbfb] to-[#efefef] pb-[1px]">
        <Grip className="w-[11.25px]" />
        <Tool name="save" />
        <Separator className="w-[6.5px]" />
        {fileTools.map((n) => <Tool key={n} name={n} />)}
        <Separator className="w-[7.5px]" />
        <Tool name="addPages" />
        <Separator className="w-[5.5px]" />
        {exportTools.map((n) => <Tool key={n} name={n} />)}
        <Grip className="w-[14px]" />
        {["atlas", "first", "prev"].map((n) => <Tool key={n} name={n} />)}
        <div className="ml-[1px] flex h-[28px] w-[61px] shrink-0 rounded-[2px] border border-[#b2b2b2] bg-[#fafafa]">
          <div className="flex w-[42px] items-center border-r border-[#b2b2b2] bg-[#efefef] pl-[3px] pt-[3px] text-[10px] text-[#5b7aa3]">1</div>
          <div className="flex flex-1 items-center justify-center">
            <div className="border-x-[3.5px] border-t-[4px] border-x-transparent border-t-[#9a9a9a]" />
          </div>
        </div>
        {["next", "last", "printOff", "exportAtlas", "atlasSettings"].map((n) => <Tool key={n} name={n} />)}
      </div>

      <div className="flex h-[28px] shrink-0 items-center border-b border-[#bdbdbd] bg-gradient-to-b from-[#fbfbfb] to-[#efefef] pt-[1px]">
        <Grip className="w-[11.25px]" />
        {["zoomIn", "zoomOut", "zoomActual", "zoomFull", "refresh"].map((n) => <Tool key={n} name={n} />)}
        <Grip className="w-[14.5px]" />
        {["lock", "unlock", "group", "ungroup", "raise", "align", "distribute", "resize"].map((n) => <Tool key={n} name={n} />)}
      </div>

      <div className="flex h-[552px] shrink-0">
        <div className="flex w-[30px] shrink-0 flex-col items-center border-r border-[#bdbdbd] bg-gradient-to-r from-[#fbfbfb] to-[#f0f0f0]">
          <svg width="16" height="5" viewBox="0 0 16 5" className="mb-[3px] mt-[4px] shrink-0">
            <path d="M0 1.500H16M0 4.500H16" stroke="#c4c4c4" strokeDasharray="1 2" />
          </svg>
          {sideTools.map((n) => (
            <div
              key={n}
              className={`flex h-[22.5px] w-[22px] shrink-0 items-center justify-center ${
                n === "select" ? "rounded-[2px] border border-[#a9a9a9] bg-[#dcdcdc]" : ""
              }`}
            >
              <svg width="15.500" height="15.500" viewBox="0 0 16 16">
                <Glyph name={n} />
              </svg>
            </div>
          ))}
        </div>

        <div className="flex w-[943px] shrink-0 flex-col">
          <TopRuler />
          <div className="flex h-[533px]">
            <SideRuler />
            <div className="relative h-[533px] w-[925px] overflow-hidden border-b border-l border-[#c4c4c4] border-l-[#d6d6d6] bg-[#d6d6d6]">
              <div className="absolute left-[187px] top-[73px] h-[395px] w-[558px] bg-[#999999]" />
              <div className="absolute left-[182px] top-[68px] h-[394px] w-[558px] bg-white" />
              <div className="absolute left-[402px] top-[72px] whitespace-nowrap font-['Liberation_Sans',sans-serif] text-[24px] leading-[28px] text-black">
                Almanzora
              </div>
              <Legend />
              <LandUseMap />
              <div className="absolute left-[374px] top-[228px] font-['Liberation_Sans',sans-serif] text-[8px] leading-[10px] text-[#333]">
                Tagili
              </div>
            </div>
          </div>
        </div>

        <div className="flex w-[5px] shrink-0 items-center justify-center">
          <svg width="5" height="18" viewBox="0 0 5 18">
            <path d="M1 0.500V18M4 0.500V18" stroke="#c8c8c8" strokeDasharray="1 2" />
          </svg>
        </div>

        <div className="flex min-w-0 flex-1 flex-col">
          <div className="flex h-[23px] items-end border-b border-[#bdbdbd]">
            <div className="flex h-[20px] w-[54px] items-center justify-center rounded-t-[2px] border border-b-0 border-[#b5b5b5] bg-[#dfdfdf] pt-[2px] tracking-[-0.4px]">
              Layout
            </div>
            <div className="-mb-px flex h-[23px] w-[92px] items-center justify-center rounded-t-[2px] border border-b-0 border-[#b5b5b5] bg-[#f8f8f8] pr-[2px] tracking-[-0.7px]">
              Item Properties
            </div>
          </div>
          <div className="flex h-[20px] items-center pl-[4px] pr-[1px]">
            <span className="tracking-[-0.4px]">Item Properties</span>
            <svg width="25" height="12" viewBox="0 0 25 12" className="ml-auto" fill="none" stroke="#757575">
              <rect x="1.500" y="1.500" width="9" height="9" rx="2" />
              <rect x="3.500" y="5.200" width="3.200" height="3.200" />
              <path d="M5.500 4.800V3.500H8.700V6.800H7.200" />
              <rect x="14.500" y="1.500" width="9" height="9" rx="2" />
              <path d="M16.800 3.800L21.200 8.200M21.200 3.800L16.800 8.200" strokeWidth="1.900" stroke="#555" />
            </svg>
          </div>
        </div>
      </div>

      <div className="flex h-[24px] shrink-0 items-center pl-[780px] pt-[4px]">
        <span className="w-[100px] shrink-0 whitespace-nowrap tracking-[-0.6px]">x: 328.321 mm</span>
        <span className="w-[98px] shrink-0 whitespace-nowrap tracking-[-0.6px]">y: 108.276 mm</span>
        <span className="w-[100px] shrink-0 whitespace-nowrap tracking-[-0.3px]">page: 1</span>
        <div className="flex h-[20px] w-[101px] shrink-0 rounded-[2px] border border-[#b0b0b0] bg-white">
          <div className="flex flex-1 items-center border-r border-[#b8b8b8] pl-[3px]">53.0%</div>
          <div className="flex w-[18px] items-center justify-center bg-[#f7f7f7]">
            <div className="border-x-[3.5px] border-t-[4px] border-x-transparent border-t-[#5a5a5a]" />
          </div>
        </div>
        <svg width="96" height="16" viewBox="0 0 96 16" className="ml-[5px] shrink-0">
          <rect x="2.500" y="5" width="91" height="4" rx="2" fill="#d5d5d5" stroke="#b8b8b8" strokeWidth="0.800" />
          <rect x="2.500" y="5" width="8" height="4" rx="2" fill="#2583d8" />
          <rect x="6.500" y="1.500" width="11" height="11" rx="2.500" fill="#fbfbfb" stroke="#b0b0b0" />
        </svg>
      </div>
    </div>
  );
}
